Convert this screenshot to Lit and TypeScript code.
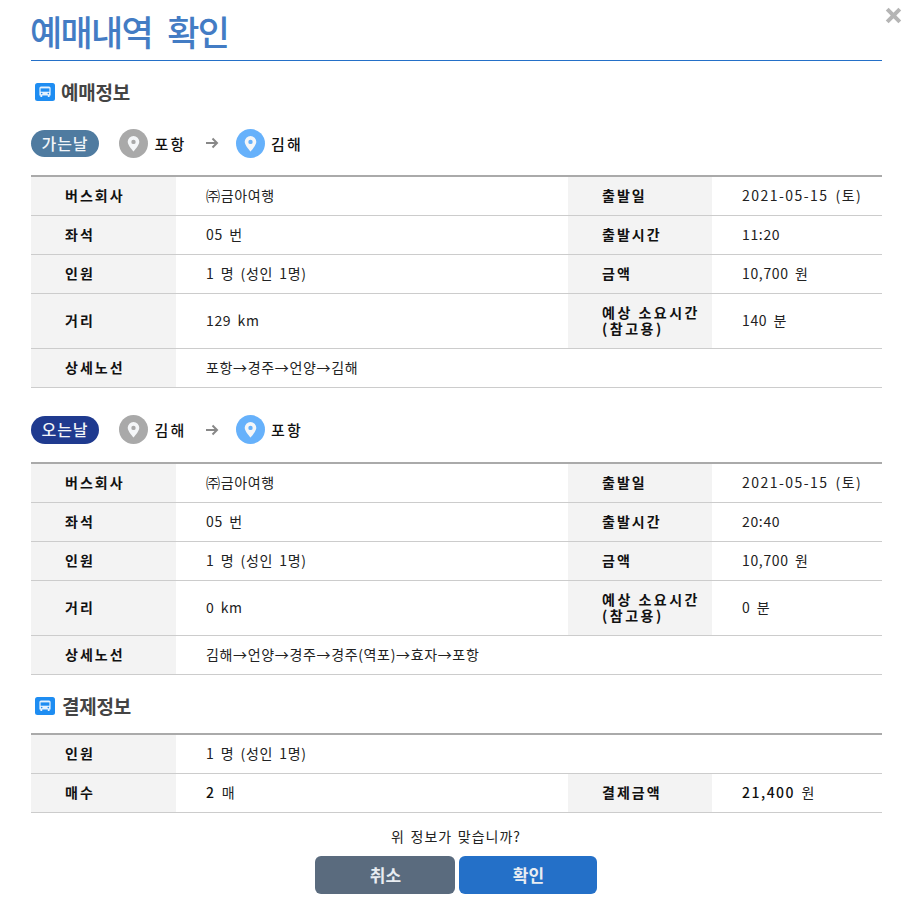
import { LitElement, html, css } from "lit";
import { customElement } from "lit/decorators.js";

type Row = { th: string; td: string; th2?: string; td2?: string; tall?: boolean; strong?: boolean; date?: boolean };

const busIcon = html`<svg class="bus" viewBox="0 0 20 18" aria-hidden="true">
  <rect width="20" height="18" rx="2.5" fill="#1e8df2"></rect>
  <path d="M6 3.5h8a1.6 1.6 0 0 1 1.6 1.6v7.4h-1v1.4h-1.8v-1.4H7.2v1.4H5.400v-1.4h-1V5.100A1.600 1.600 0 0 1 6 3.500z" fill="#e6f2fd"></path>
  <rect x="5.600" y="5.400" width="8.800" height="3.300" fill="#1e8df2"></rect>
  <circle cx="6.700" cy="10.600" r=".8" fill="#1e8df2"></circle>
  <circle cx="13.300" cy="10.600" r=".8" fill="#1e8df2"></circle>
</svg>`;

const pin = (color: string) => html`<svg class="pin" viewBox="0 0 29 29" aria-hidden="true">
  <circle cx="14.500" cy="14.500" r="14.500" fill="${color}"></circle>
  <path fill-rule="evenodd" d="M14.500 7a5.800 5.800 0 0 0-5.800 5.800c0 3.600 5.800 9.700 5.800 9.700s5.800-6.100 5.800-9.700A5.800 5.800 0 0 0 14.500 7zm0 3.700a2.200 2.200 0 1 1 0 4.400 2.200 2.200 0 0 1 0-4.400z" fill="#f4f6f8"></path>
</svg>`;

const outbound: Row[] = [
  { th: "버스회사", td: "㈜금아여행", th2: "출발일", td2: "2021-05-15 (토)", date: true },
  { th: "좌석", td: "05 번", th2: "출발시간", td2: "11:20" },
  { th: "인원", td: "1 명 (성인 1명)", th2: "금액", td2: "10,700 원" },
  { th: "거리", td: "129 km", th2: "예상 소요시간\n(참고용)", td2: "140 분", tall: true },
  { th: "상세노선", td: "포항→경주→언양→김해" },
];
const inbound: Row[] = [
  { th: "버스회사", td: "㈜금아여행", th2: "출발일", td2: "2021-05-15 (토)", date: true },
  { th: "좌석", td: "05 번", th2: "출발시간", td2: "20:40" },
  { th: "인원", td: "1 명 (성인 1명)", th2: "금액", td2: "10,700 원" },
  { th: "거리", td: "0 km", th2: "예상 소요시간\n(참고용)", td2: "0 분", tall: true },
  { th: "상세노선", td: "김해→언양→경주→경주(역포)→효자→포항" },
];
const payment: Row[] = [
  { th: "인원", td: "1 명 (성인 1명)" },
  { th: "매수", td: "2 매", th2: "결제금액", td2: "21,400 원", strong: true },
];

const emphasised = (value: string) => {
  const [num, unit] = value.split(" ");
  return html`<span class="strong">${num}</span> ${unit}`;
};

@customElement("app-root")
export class AppRoot extends LitElement {
  static styles = css`
    :host {
      display: block;
      width: 916px;
      height: 910px;
      box-sizing: border-box;
      padding: 0 34px 0 31px;
      position: relative;
      overflow: hidden;
      background: #fff;
      font-family: "Noto Sans CJK KR", "Liberation Sans", sans-serif;
      color: #222;
      font-size: 14px;
    }
    .close {
      position: absolute;
      top: 7px;
      right: 14px;
      width: 17px;
      height: 17px;
    }
    h1 {
      margin: 0;
      height: 61px;
      box-sizing: border-box;
      border-bottom: 1px solid #2470c8;
      font-size: 35px;
      line-height: 62px;
      font-weight: 500;
      color: #437cc4;
      letter-spacing: -1.7px;
      word-spacing: 9px;
      white-space: nowrap;
      text-indent: -1px;
    }
    .section {
      display: flex;
      align-items: center;
      gap: 6px;
      margin: 0;
      padding-left: 4px;
      font-size: 19px;
      font-weight: 700;
      color: #444;
      letter-spacing: -0.2px;
      line-height: 24px;
    }
    .first { margin-top: 19px; }
    .pay { margin-top: 19px; gap: 7px; }
    .bus { width: 20px; height: 18px; flex: none; }
    .route {
      display: flex;
      align-items: center;
      height: 29px;
      font-size: 15px;
      font-weight: 500;
      color: #111;
      letter-spacing: 2.2px;
    }
    .route.go { margin-top: 25px; height: 28px; }
    .route.back { margin-top: 27px; }
    .pill {
      width: 68px;
      height: 27px;
      border-radius: 14px;
      color: #f2f5f8;
      font-size: 16px;
      line-height: 26px;
      text-align: center;
      letter-spacing: 1px;
      margin-right: 20px;
    }
    .pill.go { background: #4f7ba0; }
    .pill.back { background: #1f3a8f; font-weight: 500; height: 28px; line-height: 27px; }
    .pin { width: 29px; height: 29px; flex: none; margin-right: 6.5px; }
    .arrow { width: 14px; height: 12px; margin: 0 17px 0 18px; flex: none; }
    table {
      width: 851px;
      border-collapse: separate;
      border-spacing: 0;
      table-layout: fixed;
      border-top: 2px solid #aaa;
      margin-top: 18px;
    }
    .pay + table { margin-top: 15px; }
    th, td {
      height: 36px;
      padding: 0 0 2px;
      border-bottom: 1px solid #ccc;
      font-size: 14px;
      line-height: 16px;
      text-align: left;
      white-space: pre-line;
    }
    tr.tall th, tr.tall td { height: 52px; }
    th {
      background: #f3f3f3;
      font-weight: 700;
      color: #111;
      padding-left: 34px;
      letter-spacing: 2px;
    }
    td {
      font-weight: 400;
      color: #222;
      padding-left: 30px;
      letter-spacing: 0.65px;
      word-spacing: 2.5px;
    }
    tr.tall th.second { letter-spacing: 2.5px; }
    td.date { letter-spacing: 1.45px; }
    .strong { font-weight: 500; color: #111; letter-spacing: 1.500px; }
    .confirm {
      margin: 14px 0 0;
      text-align: center;
      font-size: 14px;
      line-height: 18px;
      letter-spacing: 1px;
      word-spacing: 1.5px;
      color: #222;
      padding-right: 1px;
    }
    .buttons {
      display: flex;
      justify-content: center;
      gap: 4px;
      margin-top: 11px;
      padding-right: 1px;
    }
    button {
      height: 38px;
      border: 0;
      border-radius: 6px;
      padding: 0 0 2px 1px;
      font: 700 17px "Noto Sans CJK KR", "Liberation Sans", sans-serif;
      color: #e8edf2;
    }
    .cancel { width: 140px; background: #5a6b7e; }
    .ok { width: 138px; background: #2470c8; }
  `;

  private tableOf(rows: Row[]) {
    return html`<table>
      <colgroup>
        <col style="width:145px" /><col style="width:392px" /><col style="width:144px" /><col style="width:170px" />
      </colgroup>
      ${rows.map(
        (r) => html`<tr class=${r.tall ? "tall" : ""}>
          <th>${r.th}</th>
          ${r.th2
            ? html`<td>${r.strong ? emphasised(r.td) : r.td}</td>
                <th class="second">${r.th2}</th>
                <td class=${r.date ? "date" : ""}>${r.strong ? emphasised(r.td2 ?? "") : r.td2}</td>`
            : html`<td colspan="3">${r.td}</td>`}
        </tr>`
      )}
    </table>`;
  }

  private route(kind: string, label: string, from: string, to: string) {
    return html`<div class="route ${kind}">
      <div class="pill ${kind}">${label}</div>
      ${pin("#a9a9a9")}<span>${from}</span>
      <svg class="arrow" viewBox="0 0 14 12" aria-hidden="true">
        <path d="M1 6h11M7.500 1.500 12 6l-4.500 4.500" fill="none" stroke="#888" stroke-width="2"></path>
      </svg>
      ${pin("#66b1fb")}<span>${to}</span>
    </div>`;
  }

  render() {
    return html`
      <svg class="close" viewBox="0 0 17 17" aria-hidden="true">
        <path d="M2.200 2.200 14.800 14.800M14.800 2.200 2.200 14.800" stroke="#b5b5b5" stroke-width="4" fill="none"></path>
      </svg>
      <h1>예매내역 확인</h1>
      <h2 class="section first">${busIcon}<span>예매정보</span></h2>
      ${this.route("go", "가는날", "포항", "김해")}
      ${this.tableOf(outbound)}
      ${this.route("back", "오는날", "김해", "포항")}
      ${this.tableOf(inbound)}
      <h2 class="section pay">${busIcon}<span>결제정보</span></h2>
      ${this.tableOf(payment)}
      <p class="confirm">위 정보가 맞습니까?</p>
      <div class="buttons">
        <button class="cancel">취소</button>
        <button class="ok">확인</button>
      </div>
    `;
  }
}
